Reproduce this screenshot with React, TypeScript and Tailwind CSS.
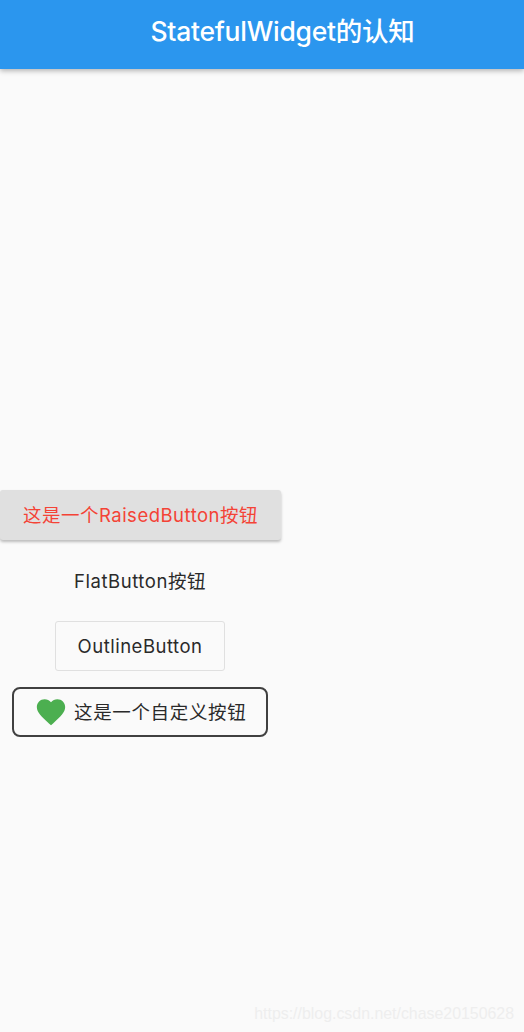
const stack = 'font-["Inter","Noto_Sans_CJK_SC",sans-serif]'

export default function App() {
  return (
    <div className={`relative flex h-[1032px] w-[524px] flex-col overflow-hidden bg-[#fafafa] ${stack}`}>
      <header className="flex h-[69px] shrink-0 items-center justify-center bg-[#2b96ee] pl-[41px] pb-[5px] text-[26.5px] font-medium tracking-[-0.25px] text-white shadow-[0_2px_5px_rgba(0,0,0,0.28)]">
        StatefulWidget的认知
      </header>

      <main className="flex w-[280px] flex-col items-center pt-[421px]">
        <button className="h-[50px] w-[281px] self-start rounded-[3px] bg-[#e0e0e0] pt-px text-[18.5px] tracking-[0.5px] text-[#f44336] shadow-[0_2px_3px_rgba(0,0,0,0.25)]">
          这是一个RaisedButton按钮
        </button>
        <button className="mt-[16px] h-[50px] w-[170px] pt-px text-[18.5px] tracking-[0.55px] text-[#2a2a2a]">
          FlatButton按钮
        </button>
        <button className="mt-[15px] h-[50px] w-[170px] rounded-[3px] border border-[#e0e0e0] pt-px text-[18.5px] tracking-[0.5px] text-[#2a2a2a]">
          OutlineButton
        </button>
        <button className="mt-[16px] flex h-[50px] w-[256px] items-center gap-[6px] rounded-[8px] border-2 border-[#404040] pl-[20px] text-[18.5px] tracking-[0.65px] text-[#2a2a2a]">
          <svg viewBox="0 0 24 24" className="h-[34px] w-[34px] fill-[#4caf50]">
            <path d="M12 21.35l-1.45-1.32C5.4 15.36 2 12.28 2 8.5 2 5.42 4.42 3 7.5 3c1.74 0 3.41.81 4.5 2.09C13.09 3.81 14.76 3 16.5 3 19.58 3 22 5.42 22 8.5c0 3.78-3.4 6.86-8.55 11.54L12 21.35z" />
          </svg>
          <span className="mt-[2px]">这是一个自定义按钮</span>
        </button>
      </main>

      <div className='absolute right-[10px] top-[1005px] font-["Liberation_Sans",sans-serif] text-[15.9px] leading-[18px] text-[#eeeeee]'>
        https://blog.csdn.net/chase20150628
      </div>
    </div>
  )
}
